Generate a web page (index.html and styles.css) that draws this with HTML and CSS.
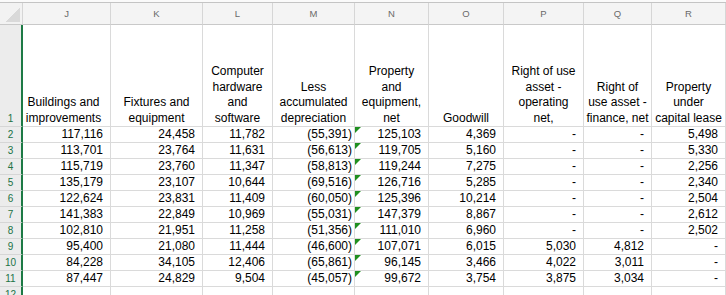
FILE: index.html
```html
<!DOCTYPE html>
<html lang="en">
<head>
    <meta charset="UTF-8">
    <meta name="viewport" content="width=device-width, initial-scale=1.0">
    <title>Property and equipment</title>
    <link rel="stylesheet" href="styles.css">
</head>
<body>
    <div class="sheet">
        <table class="grid">
            <colgroup>
                <col class="col-head">
                <col class="col-j">
                <col class="col-k">
                <col class="col-l">
                <col class="col-m">
                <col class="col-n">
                <col class="col-o">
                <col class="col-p">
                <col class="col-q">
                <col class="col-r">
            </colgroup>
            <thead>
                <tr>
                    <th class="corner"></th>
                    <th>J</th>
                    <th>K</th>
                    <th>L</th>
                    <th>M</th>
                    <th>N</th>
                    <th>O</th>
                    <th>P</th>
                    <th>Q</th>
                    <th>R</th>
                </tr>
            </thead>
            <tbody>
                <tr class="labels">
                    <th class="rownum">1</th>
                    <td class="shift">Buildings and<br>improvements</td>
                    <td>Fixtures and<br>equipment</td>
                    <td>Computer<br>hardware<br>and<br>software</td>
                    <td>Less<br>accumulated<br>depreciation</td>
                    <td>Property<br>and<br>equipment,<br>net</td>
                    <td>Goodwill</td>
                    <td>Right of use<br>asset -<br>operating<br>net,</td>
                    <td>Right of<br>use asset -<br>finance, net</td>
                    <td>Property<br>under<br>capital lease</td>
                </tr>
                <tr>
                    <th class="rownum">2</th>
                    <td>117,116</td><td>24,458</td><td>11,782</td><td class="neg">(55,391)</td>
                    <td class="flag">125,103</td><td>4,369</td><td>-</td><td>-</td><td>5,498</td>
                </tr>
                <tr>
                    <th class="rownum">3</th>
                    <td>113,701</td><td>23,764</td><td>11,631</td><td class="neg">(56,613)</td>
                    <td class="flag">119,705</td><td>5,160</td><td>-</td><td>-</td><td>5,330</td>
                </tr>
                <tr>
                    <th class="rownum">4</th>
                    <td>115,719</td><td>23,760</td><td>11,347</td><td class="neg">(58,813)</td>
                    <td class="flag">119,244</td><td>7,275</td><td>-</td><td>-</td><td>2,256</td>
                </tr>
                <tr>
                    <th class="rownum">5</th>
                    <td>135,179</td><td>23,107</td><td>10,644</td><td class="neg">(69,516)</td>
                    <td class="flag">126,716</td><td>5,285</td><td>-</td><td>-</td><td>2,340</td>
                </tr>
                <tr>
                    <th class="rownum">6</th>
                    <td>122,624</td><td>23,831</td><td>11,409</td><td class="neg">(60,050)</td>
                    <td class="flag">125,396</td><td>10,214</td><td>-</td><td>-</td><td>2,504</td>
                </tr>
                <tr>
                    <th class="rownum">7</th>
                    <td>141,383</td><td>22,849</td><td>10,969</td><td class="neg">(55,031)</td>
                    <td class="flag">147,379</td><td>8,867</td><td>-</td><td>-</td><td>2,612</td>
                </tr>
                <tr>
                    <th class="rownum">8</th>
                    <td>102,810</td><td>21,951</td><td>11,258</td><td class="neg">(51,356)</td>
                    <td class="flag">111,010</td><td>6,960</td><td>-</td><td>-</td><td>2,502</td>
                </tr>
                <tr>
                    <th class="rownum">9</th>
                    <td>95,400</td><td>21,080</td><td>11,444</td><td class="neg">(46,600)</td>
                    <td class="flag">107,071</td><td>6,015</td><td>5,030</td><td>4,812</td><td>-</td>
                </tr>
                <tr>
                    <th class="rownum">10</th>
                    <td>84,228</td><td>34,105</td><td>12,406</td><td class="neg">(65,861)</td>
                    <td class="flag">96,145</td><td>3,466</td><td>4,022</td><td>3,011</td><td>-</td>
                </tr>
                <tr>
                    <th class="rownum">11</th>
                    <td>87,447</td><td>24,829</td><td>9,504</td><td class="neg">(45,057)</td>
                    <td class="flag">99,672</td><td>3,754</td><td>3,875</td><td>3,034</td><td>-</td>
                </tr>
                <tr>
                    <th class="rownum">12</th>
                    <td></td><td></td><td></td><td></td><td></td><td></td><td></td><td></td><td></td>
                </tr>
            </tbody>
        </table>
    </div>
</body>
</html>
```

FILE: styles.css
```css
* {
    margin: 0;
    padding: 0;
    box-sizing: border-box;
}

body {
    font-family: "Liberation Sans", Arial, sans-serif;
    background: #fafafa;
    padding-top: 2px;
    height: 100vh;
    overflow: hidden;
}

.sheet {
    border-top: 1px solid #c4c4c4;
    background: #fff;
}

.grid {
    border-collapse: separate;
    border-spacing: 0;
    table-layout: fixed;
    width: 726px;
}

.col-head { width: 23px; }
.col-j { width: 88px; }
.col-k { width: 92px; }
.col-l { width: 70px; }
.col-m { width: 82px; }
.col-n { width: 74px; }
.col-o { width: 75px; }
.col-p { width: 80px; }
.col-q { width: 68px; }
.col-r { width: 74px; }

/* column letters */
.grid thead th {
    height: 22px;
    background: #f4f4f4;
    border-right: 1px solid #d6d6d6;
    border-bottom: 1px solid #c9c9c9;
    font-size: 9.5px;
    font-weight: normal;
    color: #6a6a6a;
    text-align: center;
    vertical-align: middle;
}

.grid thead th.corner {
    background: #f2f2f2 linear-gradient(to bottom right, transparent 50%, #d9d9d9 50%) no-repeat right 2px bottom 2px / 15px 14px;
}

/* row numbers */
.rownum {
    height: 16px;
    background: #ececec;
    border-right: 2px solid #1d7a45;
    border-bottom: 1px solid #d6d6d6;
    color: #217346;
    font-size: 10px;
    font-weight: normal;
    text-align: center;
    vertical-align: bottom;
    line-height: 14px;
}

.grid td {
    height: 16px;
    padding: 0 7px 0 2px;
    border-right: 1px solid #dadada;
    border-bottom: 1px solid #dadada;
    font-size: 12px;
    line-height: 15px;
    color: #000;
    text-align: right;
    vertical-align: bottom;
    white-space: nowrap;
}

.grid td.neg {
    padding-right: 2px;
}

.labels td,
.labels th {
    height: 102px;
}

.grid .labels td {
    padding: 0 2px 0 2px;
    text-align: center;
    line-height: 15.5px;
}

.grid .labels td.shift {
    padding-right: 8px;
}

/* green error marker in the corner of the cell */
.grid td.flag {
    position: relative;
}

.grid td.flag::before {
    content: "";
    position: absolute;
    left: 0;
    top: 0;
    border-top: 6px solid #1f8f1f;
    border-right: 6px solid transparent;
}
```
